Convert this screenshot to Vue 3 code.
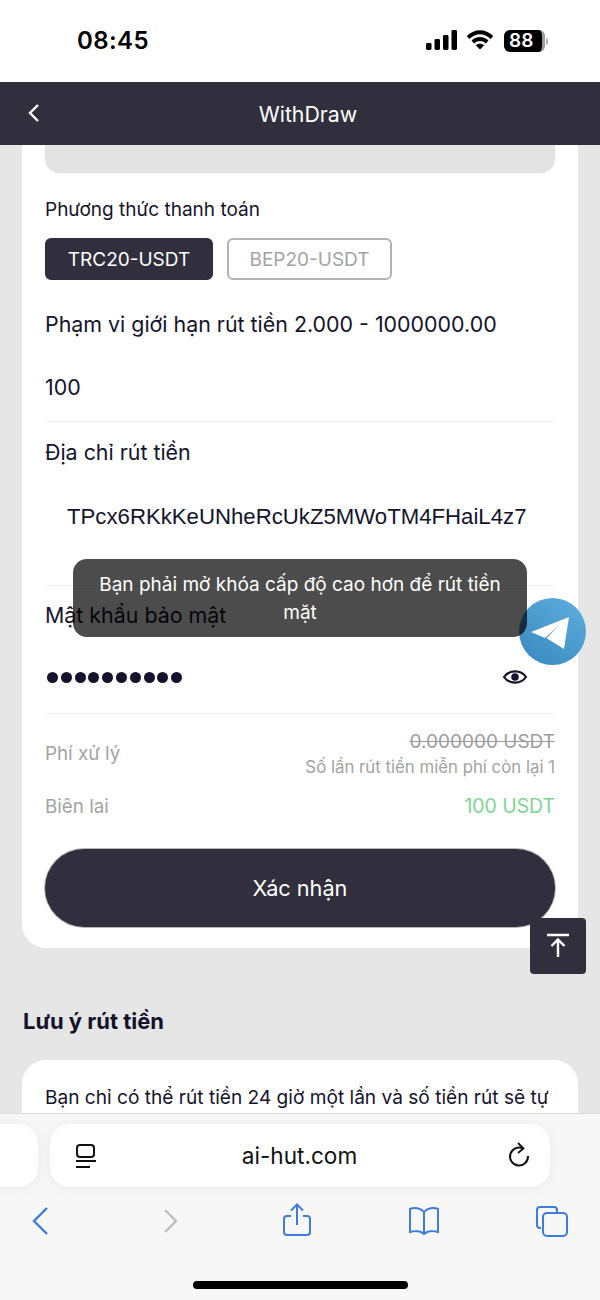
<script setup>
const navIcons = ['back', 'forward', 'share', 'book', 'tabs']
</script>

<template>
  <div class="phone">
    <div class="status">
      <span class="time">08:45</span>
      <div class="status-icons">
        <svg width="32" height="20" viewBox="0 0 32 20"><rect x="0" y="13" width="5.5" height="7" rx="1.4"/><rect x="8.5" y="9" width="5.5" height="11" rx="1.4"/><rect x="17" y="5" width="5.5" height="15" rx="1.4"/><rect x="25.5" y="0" width="5.5" height="20" rx="1.4"/></svg>
        <svg width="28" height="20" viewBox="0 0 28 20"><path d="M2 7.5C9.5 .5 18.5 .5 26 7.5" fill="none" stroke="#000" stroke-width="3.8"/><path d="M6.8 12C11 8 17 8 21.2 12" fill="none" stroke="#000" stroke-width="3.8"/><path d="M14 19.5 9.8 15.2C12.2 13.2 15.8 13.2 18.2 15.2Z"/></svg>
        <div class="battery"><div class="battery-body"><span>88</span></div><i></i></div>
      </div>
    </div>

    <header class="topbar">
      <svg class="chev" width="14" height="20" viewBox="0 0 14 20"><path d="M11 2 3 10l8 8" fill="none" stroke="#fff" stroke-width="2.4"/></svg>
      <span class="title">WithDraw</span>
    </header>

    <main class="page">
      <section class="card">
        <div class="clip"></div>
        <p class="label small">Phương thức thanh toán</p>
        <div class="methods">
          <button class="method on">TRC20-USDT</button>
          <button class="method">BEP20-USDT</button>
        </div>
        <p class="limit">Phạm vi giới hạn rút tiền 2.000 - 1000000.00</p>
        <div class="field amount">100</div>
        <p class="label addr-label">Địa chỉ rút tiền</p>
        <div class="field addr">TPcx6RKkKeUNheRcUkZ5MWoTM4FHaiL4z7</div>
        <p class="label pw-label">Mật khẩu bảo mật</p>
        <div class="field pw">
          <div class="dots"><i v-for="n in 10" :key="n"></i></div>
          <svg width="26" height="20" viewBox="0 0 26 20"><path d="M2 10C7 2.6 19 2.6 24 10 19 17.4 7 17.4 2 10Z" fill="none" stroke="#14132b" stroke-width="2.2"/><circle cx="13" cy="10" r="3.8" fill="#14132b"/></svg>
        </div>
        <div class="fee">
          <span class="key">Phí xử lý</span>
          <div class="fee-values">
            <s>0.000000 USDT</s>
            <small>Số lần rút tiền miễn phí còn lại 1</small>
          </div>
        </div>
        <div class="receipt">
          <span class="key">Biên lai</span>
          <span class="green">100 USDT</span>
        </div>
        <button class="confirm">Xác nhận</button>
      </section>

      <h2>Lưu ý rút tiền</h2>

      <section class="card note">
        <p>Bạn chỉ có thể rút tiền 24 giờ một lần và số tiền rút sẽ tự</p>
      </section>
    </main>

    <footer class="safari">
      <div class="bar-row">
        <div class="stub"></div>
        <div class="url">
          <svg width="24" height="26" viewBox="0 0 24 26" fill="none" stroke="#111" stroke-width="2"><rect x="3" y="2" width="17" height="12" rx="3"/><path d="M2 18h20M2 24h14"/></svg>
          <span class="host">ai-hut.com</span>
          <svg width="24" height="28" viewBox="0 0 24 28" fill="none" stroke="#111" stroke-width="2"><path d="M16 6.5A9 9 0 1 0 21 14"/><path d="M11 1l5.5 5.5L11 11" stroke-width="1.8"/></svg>
        </div>
      </div>
      <nav class="nav">
        <svg v-for="name in navIcons" :key="name" width="36" height="36" viewBox="0 0 36 36" fill="none" stroke="#3f7bd8" stroke-width="2">
          <path v-if="name === 'back'" d="M25 5 12 18l13 13" stroke-width="2.4"/>
          <path v-else-if="name === 'forward'" d="M15 7l11 11-11 11" stroke="#bdbdbd" stroke-width="2.4"/>
          <template v-else-if="name === 'share'">
            <path d="M13 13H9a3 3 0 0 0-3 3v13a3 3 0 0 0 3 3h20a3 3 0 0 0 3-3V16a3 3 0 0 0-3-3h-4"/>
            <path d="M19 22V2M13 7.500l6-6 6 6"/>
          </template>
          <template v-else-if="name === 'book'">
            <path d="M18 9C15 5 8 4 4 6v23c5-1.500 11-1 14 2 3-3 9-3.500 14-2V6c-4-2-11-1-14 3Zm0 0v22"/>
          </template>
          <template v-else>
            <path d="M7 25H6a3 3 0 0 1-3-3V7a3 3 0 0 1 3-3h14a3 3 0 0 1 3 3v2"/>
            <rect x="9" y="10" width="24" height="23" rx="4"/>
          </template>
        </svg>
      </nav>
      <div class="home"></div>
    </footer>

    <div class="telegram">
      <svg width="67" height="67" viewBox="0 0 67 67">
        <defs><linearGradient id="tg" x1="0.8" y1="0.1" x2="0.2" y2="0.9"><stop offset="0" stop-color="#5aa9da"/><stop offset="1" stop-color="#3d8dc4"/></linearGradient></defs>
        <circle cx="33.500" cy="33.500" r="33.500" fill="url(#tg)"/>
        <path d="M50 19 45 51 27.700 40.300 40.300 27 26 40 12 34Z" fill="#fff"/>
      </svg>
    </div>
    <div class="toast">Bạn phải mở khóa cấp độ cao hơn để rút tiền mặt</div>
    <div class="totop">
      <svg width="24" height="26" viewBox="0 0 24 26" fill="none" stroke="#fff" stroke-width="2.400"><path d="M1 2h22M12 24V7M5.500 13 12 6.500l6.500 6.500"/></svg>
    </div>
  </div>
</template>

<style>
html, body { margin: 0; background: #fff; }
</style>

<style scoped>
* { box-sizing: border-box; }
.phone {
  position: relative;
  width: 600px;
  height: 1300px;
  overflow: hidden;
  display: flex;
  flex-direction: column;
  font-family: Inter, "Noto Sans", sans-serif;
  color: #14132b;
  background: #fff;
}
.status {
  height: 82px;
  flex: none;
  display: flex;
  justify-content: space-between;
  padding: 27px 52px 0 77px;
  background: #fff;
}
.time { font-size: 24px; font-weight: 600; line-height: 28px; color: #000; letter-spacing: .4px; }
.status-icons { display: flex; gap: 8px; align-items: flex-start; padding-top: 4px; margin-top: -1px; }
.status-icons svg { fill: #000; }
.battery { display: flex; align-items: center; gap: 1px; margin-left: 2px; }
.battery-body {
  width: 41px; height: 22px; border-radius: 6px; background: #000; color: #fff;
  display: flex; align-items: center; padding-left: 5px;
  font: 600 19px/22px Inter, sans-serif; border-right: 3px solid #9b9b9b;
}
.battery i { width: 2px; height: 7px; background: #b5b5b5; border-radius: 0 2px 2px 0; }
.topbar {
  height: 63px;
  flex: none;
  position: relative;
  z-index: 2;
  display: flex;
  align-items: center;
  justify-content: center;
  background: #312f3d;
  color: #fff;
  font-size: 21.300px;
}
.title { padding-left: 16px; }
.chev { position: absolute; left: 27px; top: 21px; }
.page { flex: 1; min-height: 0; overflow: hidden; background: #e6e6e6; }
.card {
  margin: 0 22px;
  padding: 0 23px 21px;
  background: #fff;
  border-radius: 0 0 24px 24px;
}
.clip { height: 28px; background: #e3e3e3; border-radius: 0 0 14px 14px; }
p { margin: 0; }
.label { font-size: 21.400px; line-height: 28px; }
.label.small { margin-top: 23px; font-size: 19px; line-height: 28px; }
.methods { display: flex; gap: 14px; margin-top: 14px; }
.method {
  height: 42px; border-radius: 6px; border: 2px solid #b3b3b3; background: #fff;
  color: #a3a3a3; font: 19px Inter, sans-serif; width: 165px; padding: 0;
}
.method.on { width: 168px; background: #312f3d; border-color: #312f3d; color: #fff; }
.limit { margin-top: 29px; font-size: 21.400px; line-height: 30px; }
.field { font-size: 21.400px; border-bottom: 1px solid #f0f0f0; }
.amount { height: 83px; padding-top: 33px; line-height: 30px; }
.addr-label { margin-top: 16px; }
.addr { height: 120px; padding: 36px 0 0 22px; line-height: 30px; font-size: 22.200px; font-family: "Liberation Sans", sans-serif; color: #14132b; }
.pw-label { margin-top: 15px; }
.pw { height: 85px; display: flex; align-items: center; justify-content: space-between; padding: 12px 27px 0 2px; }
.dots { display: flex; gap: 2.800px; }
.dots i { width: 11px; height: 11px; border-radius: 50%; background: #14132b; }
.fee { display: flex; justify-content: space-between; margin-top: 14px; height: 50px; }
.key { font-size: 18.800px; color: #a3a3a3; line-height: 52px; }
.fee-values { display: flex; flex-direction: column; align-items: flex-end; }
.fee-values s { font-size: 19px; color: #9d9d9d; line-height: 28px; }
.fee-values small { font-size: 16.800px; color: #a3a3a3; line-height: 22px; }
.receipt { display: flex; justify-content: space-between; align-items: baseline; height: 50px; margin-top: 3px; }
.receipt .key { line-height: 50px; }
.green { font-size: 19.400px; line-height: 50px; color: #7dd692; }
.confirm {
  display: block; width: 510px; height: 78px; margin-top: 18px; border: 0; padding: 0;
  border-radius: 40px; background: #312f3d; color: #fff; font: 21.700px Inter, sans-serif;
  box-shadow: 0 0 0 1px rgba(49, 47, 61, .35);
}
h2 { margin: 55px 0 0 23px; font-size: 22px; line-height: 36px; font-weight: 700; color: #14132b; }
.note { margin-top: 21px; padding: 24px 23px 0; height: 80px; border-radius: 24px 24px 0 0; }
.note p { font-size: 19.100px; line-height: 26px; white-space: nowrap; }
.safari {
  height: 187px;
  flex: none;
  background: #f7f7f7;
  border-top: 1px solid #dcdcdc;
  padding-top: 10px;
  position: relative;
}
.bar-row { display: flex; gap: 12px; margin-left: -40px; }
.stub { width: 78px; height: 63px; flex: none; background: #fff; border-radius: 0 20px 20px 0; box-shadow: 0 2px 14px rgba(0,0,0,.06); }
.url {
  width: 500px; height: 63px; flex: none; background: #fff; border-radius: 20px;
  display: flex; align-items: center; justify-content: space-between; padding: 0 19px 0 24px;
  box-shadow: 0 2px 14px rgba(0,0,0,.06);
  color: #111; font-size: 22.600px;
}
.host { margin-right: 6px; }
.nav { display: flex; justify-content: space-between; padding: 0 30px 0 22px; margin-top: 16px; }
.home { position: absolute; left: 193px; bottom: 11px; width: 215px; height: 8px; border-radius: 4px; background: #000; }
.toast {
  position: absolute; left: 73px; top: 559px; width: 454px; height: 78px;
  padding: 12px 20px; background: rgba(0,0,0,.7); color: #fff; border-radius: 14px;
  font-size: 19px; line-height: 28px; text-align: center;
}
.telegram { position: absolute; left: 519px; top: 598px; width: 67px; height: 67px; }
.totop {
  position: absolute; left: 530px; top: 918px; width: 56px; height: 56px;
  background: #312f3d; border-radius: 4px; display: flex; align-items: center; justify-content: center;
}
</style>
